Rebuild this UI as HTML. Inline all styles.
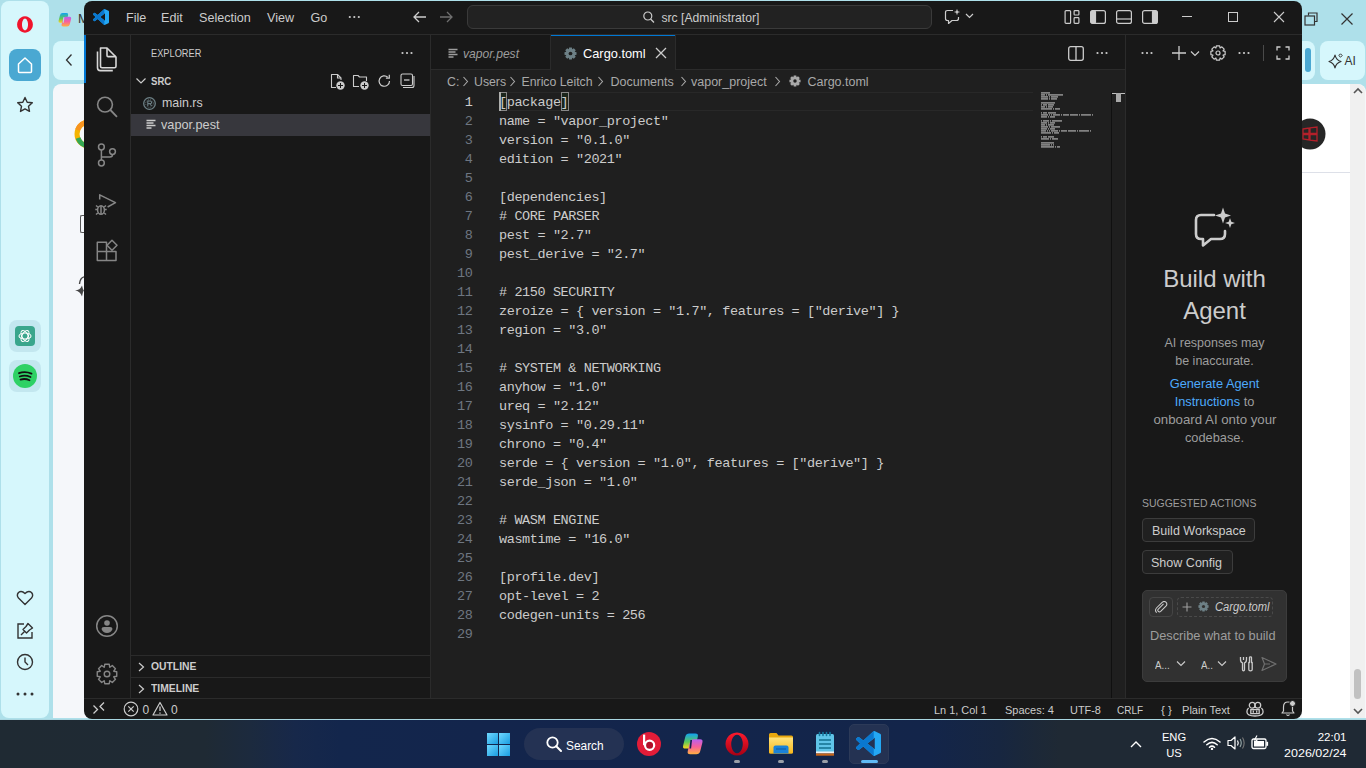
<!DOCTYPE html><html><head><meta charset="utf-8"><style>html,body{margin:0;padding:0;width:1366px;height:768px;overflow:hidden;position:relative;background:#aee0ea}</style></head><body>
<div style="position:absolute;left:0px;top:0px;width:1366px;height:720px;background:#aee0ea;"></div>
<div style="position:absolute;left:1px;top:1px;width:48px;height:717px;background:#d6f7fc;border-radius:8px;"></div>
<svg style="position:absolute;left:17px;top:16px;" width="16" height="17" viewBox="0 0 16 17"><path fill-rule="evenodd" d="M8 0.3 A7.9 8.2 0 1 1 7.99 0.3 Z M8 2.6 A3 5.9 0 1 0 8.01 2.6 Z" fill="#f0142c"/></svg>
<div style="position:absolute;left:9px;top:49px;width:32px;height:32px;background:#4aa8d2;border-radius:8px;"></div>
<svg style="position:absolute;left:9px;top:49px;" width="32" height="32" viewBox="0 0 32 32"><path d="M9.5 15 L16 9 L22.5 15 V22.5 Q22.5 23.5 21.5 23.5 H10.5 Q9.5 23.5 9.5 22.5 Z" fill="none" stroke="#fff" stroke-width="1.5" stroke-linejoin="round"/></svg>
<svg style="position:absolute;left:16px;top:96px;" width="18" height="17" viewBox="0 0 18 17"><path d="M9 1.5 L11.2 6.2 L16.3 6.8 L12.5 10.3 L13.5 15.4 L9 12.9 L4.5 15.4 L5.5 10.3 L1.7 6.8 L6.8 6.2 Z" fill="none" stroke="#333" stroke-width="1.4" stroke-linejoin="round"/></svg>
<div style="position:absolute;left:9px;top:320px;width:32px;height:32px;background:#c3e7ef;border-radius:8px;"></div>
<div style="position:absolute;left:15px;top:326px;width:20px;height:20px;background:#3aa68c;border-radius:4px;"></div>
<svg style="position:absolute;left:15px;top:326px;" width="20" height="20" viewBox="0 0 20 20"><g fill="none" stroke="#fff" stroke-width="1.1"><ellipse cx="10" cy="10" rx="6" ry="3" transform="rotate(0 10 10)"/><ellipse cx="10" cy="10" rx="6" ry="3" transform="rotate(60 10 10)"/><ellipse cx="10" cy="10" rx="6" ry="3" transform="rotate(120 10 10)"/></g></svg>
<div style="position:absolute;left:9px;top:360px;width:32px;height:32px;background:#c3e7ef;border-radius:8px;"></div>
<svg style="position:absolute;left:13px;top:364px;" width="24" height="24" viewBox="0 0 24 24"><circle cx="12" cy="12" r="12" fill="#2ed165"/><path d="M6 9.2 Q12 6.8 18.5 9.6 M6.8 12.5 Q12 10.6 17.5 13 M7.5 15.6 Q12 14.2 16.5 16.2" fill="none" stroke="#111" stroke-width="1.8" stroke-linecap="round"/></svg>
<svg style="position:absolute;left:15px;top:588px;" width="20" height="20" viewBox="0 0 20 20"><path d="M10 16.5 L3.5 10 Q1.2 7.2 3.5 4.5 Q6.5 2 10 5.5 Q13.5 2 16.5 4.5 Q18.8 7.2 16.5 10 Z" fill="none" stroke="#333" stroke-width="1.4" stroke-linejoin="round"/></svg>
<svg style="position:absolute;left:15px;top:621px;" width="20" height="20" viewBox="0 0 20 20"><path d="M9 3 H3 V17 H17 V11" fill="none" stroke="#333" stroke-width="1.4"/><path d="M13 2.5 L17.5 7 L14.5 9 L11.5 12 L8 8.5 L11 5.5 Z M9.5 10.5 L6 14" fill="none" stroke="#333" stroke-width="1.4" stroke-linejoin="round"/></svg>
<svg style="position:absolute;left:15px;top:652px;" width="20" height="20" viewBox="0 0 20 20"><circle cx="10" cy="10" r="7.5" fill="none" stroke="#333" stroke-width="1.4"/><path d="M10 5.5 V10 L13 13" fill="none" stroke="#333" stroke-width="1.4"/></svg>
<svg style="position:absolute;left:15px;top:690px;" width="20" height="8" viewBox="0 0 20 8"><circle cx="3" cy="4" r="1.5" fill="#333"/><circle cx="10" cy="4" r="1.5" fill="#333"/><circle cx="17" cy="4" r="1.5" fill="#333"/></svg>
<svg style="position:absolute;left:57px;top:12px;" width="16" height="15" viewBox="0 0 24 23"><defs><linearGradient id="cpxa" x1="0" y1="0" x2="0" y2="1"><stop offset="0" stop-color="#12a2f0"/><stop offset="0.55" stop-color="#5cc85a"/><stop offset="1" stop-color="#ffd21a"/></linearGradient><linearGradient id="cpxb" x1="0" y1="0" x2="0" y2="1"><stop offset="0" stop-color="#b860f0"/><stop offset="0.5" stop-color="#f8609a"/><stop offset="1" stop-color="#ffb040"/></linearGradient></defs><g transform="skewX(-14)"><rect x="5.5" y="1.6" width="12.5" height="15" rx="3.2" fill="url(#cpxa)"/><rect x="3" y="9" width="6" height="7.6" fill="#f06030" opacity="0.0"/><rect x="11.5" y="7.2" width="12.5" height="15" rx="3.2" fill="url(#cpxb)"/><path d="M12.2 8 L13.4 16.5" stroke="#aee0ea" stroke-width="1.6"/></g></svg>
<div style="position:absolute;top:9px;line-height:20px;font-family:'Liberation Sans',sans-serif;font-size:13px;color:#333;white-space:pre;left:78px;">M</div>
<div style="position:absolute;left:53px;top:41px;width:60px;height:39px;background:#d6f7fc;border-radius:8px;"></div>
<svg style="position:absolute;left:64px;top:53px;" width="10" height="14" viewBox="0 0 10 14"><path d="M7.5 1.5 L2.5 7 L7.5 12.5" fill="none" stroke="#333" stroke-width="1.3"/></svg>
<div style="position:absolute;left:53px;top:84px;width:1313px;height:634px;background:#f5f7fa;border-radius:8px 8px 0 0;"></div>
<div style="position:absolute;left:1302px;top:84px;width:48px;height:634px;background:#ffffff;"></div>
<div style="position:absolute;left:1350px;top:84px;width:15px;height:634px;background:#f0f0f0;border-radius:0 8px 0 0;"></div>
<svg style="position:absolute;left:1352px;top:86px;" width="12" height="10" viewBox="0 0 12 10"><path d="M2 7 L6 3 L10 7" fill="none" stroke="#555" stroke-width="1.6"/></svg>
<svg style="position:absolute;left:1352px;top:706px;" width="12" height="10" viewBox="0 0 12 10"><path d="M2 3 L6 7 L10 3" fill="none" stroke="#555" stroke-width="1.6"/></svg>
<div style="position:absolute;left:1354px;top:669px;width:7px;height:30px;background:#c1c1c1;border-radius:4px;"></div>
<div style="position:absolute;left:1302px;top:172px;width:48px;height:1px;background:#dde0e8;"></div>
<svg style="position:absolute;left:1294px;top:118px;" width="32" height="32" viewBox="0 0 32 32"><circle cx="16" cy="16" r="15.5" fill="#262626"/><path d="M9 11 L15 10 V15.5 H9 Z M16 9.8 L23 9 V15.5 H16 Z M9 16.5 H15 V22 L9 21 Z M16 16.5 H23 V23 L16 22.2 Z" fill="none" stroke="#b3202a" stroke-width="1.3"/></svg>
<svg style="position:absolute;left:72px;top:118px;" width="20" height="32" viewBox="0 0 20 32"><path d="M17 4 A12 12 0 0 0 17 28" fill="none" stroke="#f4b400" stroke-width="5"/><path d="M17 4 A12 12 0 0 0 5.5 12" fill="none" stroke="#f7931e" stroke-width="5"/><path d="M17 28 A12 12 0 0 1 6 20" fill="none" stroke="#34a853" stroke-width="5"/></svg>
<div style="position:absolute;left:80px;top:215px;width:8px;height:18px;background:transparent;border:1.5px solid #555;border-right:none;border-radius:2px 0 0 2px;box-sizing:border-box;"></div>
<svg style="position:absolute;left:74px;top:275px;" width="10" height="24" viewBox="0 0 10 24"><path d="M10 1.8 Q6 3 5.5 9" fill="none" stroke="#444" stroke-width="1.4"/><path d="M1 15.5 Q6 15.3 8 10.5 Q9 15 10 15.5 Q9 16 8 21.5 Q6 15.8 1 15.5 Z" fill="#444"/></svg>
<svg style="position:absolute;left:1304px;top:12px;" width="14" height="14" viewBox="0 0 14 14"><path d="M4.5 3.5 V1 H13 V9.5 H10.5" fill="none" stroke="#333" stroke-width="1.2"/><rect x="1" y="4" width="9.5" height="9" fill="none" stroke="#333" stroke-width="1.2"/></svg>
<svg style="position:absolute;left:1340px;top:12px;" width="14" height="14" viewBox="0 0 14 14"><path d="M1.5 1.5 L12.5 12.5 M12.5 1.5 L1.5 12.5" fill="none" stroke="#333" stroke-width="1.2"/></svg>
<div style="position:absolute;left:1280px;top:41px;width:35px;height:39px;background:#d6f7fc;border-radius:8px;"></div>
<div style="position:absolute;left:1305px;top:48px;width:6px;height:24px;background:#4aa8d2;border-radius:3px;"></div>
<div style="position:absolute;left:1320px;top:41px;width:45px;height:39px;background:#d6f7fc;border-radius:8px;"></div>
<svg style="position:absolute;left:1328px;top:53px;" width="16" height="16" viewBox="0 0 16 16"><path d="M7 2 Q8 7 13 8.5 Q8 10 7 15 Q6 10 1 8.5 Q6 7 7 2 Z" fill="none" stroke="#333" stroke-width="1.2" stroke-linejoin="round"/><path d="M12.5 0.8 L14.2 2.5 L12.5 4.2 L10.8 2.5 Z" fill="none" stroke="#333" stroke-width="1"/></svg>
<div style="position:absolute;top:50.5px;line-height:20px;font-family:'Liberation Sans',sans-serif;font-size:12px;color:#333;white-space:pre;left:1344.5px;">AI</div>
<div style="position:absolute;left:84px;top:1px;width:1218px;height:718px;background:#181818;border-radius:8px;overflow:hidden;"></div>
<div style="position:absolute;left:84px;top:34px;width:1218px;height:1px;background:#2b2b2b;"></div>
<div style="position:absolute;left:130px;top:35px;width:1px;height:663px;background:#2b2b2b;"></div>
<div style="position:absolute;left:430px;top:35px;width:1px;height:663px;background:#2b2b2b;"></div>
<div style="position:absolute;left:431px;top:69px;width:694px;height:629px;background:#1f1f1f;"></div>
<div style="position:absolute;left:431px;top:69px;width:694px;height:1px;background:#2b2b2b;"></div>
<div style="position:absolute;left:1125px;top:35px;width:1px;height:663px;background:#2b2b2b;"></div>
<div style="position:absolute;left:84px;top:698px;width:1218px;height:1px;background:#2b2b2b;"></div>
<svg style="position:absolute;left:93px;top:9px;" width="16" height="16" viewBox="0 0 100 100"><defs><clipPath id="vsa"><rect x="0" y="0" width="71" height="100"/></clipPath></defs><path d="M96.46 10.8L75.86.87a6.23 6.23 0 0 0-7.1 1.2L29.4 38.04 12.26 25.02a4.16 4.16 0 0 0-5.32.24L1.43 30.26a4.17 4.17 0 0 0 0 6.16L16.3 50 1.43 63.58a4.17 4.17 0 0 0 0 6.16l5.51 5a4.16 4.16 0 0 0 5.32.24l17.14-13.02 39.36 35.96a6.23 6.23 0 0 0 7.1 1.2l20.6-9.92a6.25 6.25 0 0 0 3.54-5.63V16.43a6.25 6.25 0 0 0-3.54-5.63zM75.02 72.7 45.1 50l29.92-22.7v45.4z" fill="#24a8f4"/><path d="M96.46 10.8L75.86.87a6.23 6.23 0 0 0-7.1 1.2L29.4 38.04 12.26 25.02a4.16 4.16 0 0 0-5.32.24L1.43 30.26a4.17 4.17 0 0 0 0 6.16L16.3 50 1.43 63.58a4.17 4.17 0 0 0 0 6.16l5.51 5a4.16 4.16 0 0 0 5.32.24l17.14-13.02 39.36 35.96a6.23 6.23 0 0 0 7.1 1.2l20.6-9.92a6.25 6.25 0 0 0 3.54-5.63V16.43a6.25 6.25 0 0 0-3.54-5.63zM75.02 72.7 45.1 50l29.92-22.7v45.4z" fill="#0a78cf" clip-path="url(#vsa)"/></svg>
<div style="position:absolute;top:8px;line-height:20px;font-family:'Liberation Sans',sans-serif;font-size:12.6px;color:#cccccc;white-space:pre;left:126px;">File</div>
<div style="position:absolute;top:8px;line-height:20px;font-family:'Liberation Sans',sans-serif;font-size:12.6px;color:#cccccc;white-space:pre;left:161px;">Edit</div>
<div style="position:absolute;top:8px;line-height:20px;font-family:'Liberation Sans',sans-serif;font-size:12.6px;color:#cccccc;white-space:pre;left:199px;">Selection</div>
<div style="position:absolute;top:8px;line-height:20px;font-family:'Liberation Sans',sans-serif;font-size:12.6px;color:#cccccc;white-space:pre;left:267px;">View</div>
<div style="position:absolute;top:8px;line-height:20px;font-family:'Liberation Sans',sans-serif;font-size:12.6px;color:#cccccc;white-space:pre;left:310.5px;">Go</div>
<svg style="position:absolute;left:347px;top:15px;" width="14" height="4" viewBox="0 0 14 4"><circle cx="2.8" cy="2" r="1.1" fill="#ccc"/><circle cx="7.3" cy="2" r="1.1" fill="#ccc"/><circle cx="11.8" cy="2" r="1.1" fill="#ccc"/></svg>
<svg style="position:absolute;left:412px;top:10px;" width="16" height="14" viewBox="0 0 16 14"><path d="M14 7 H2 M7 2 L2 7 L7 12" fill="none" stroke="#cccccc" stroke-width="1.3"/></svg>
<svg style="position:absolute;left:438px;top:10px;" width="16" height="14" viewBox="0 0 16 14"><path d="M2 7 H14 M9 2 L14 7 L9 12" fill="none" stroke="#6f6f6f" stroke-width="1.3"/></svg>
<div style="position:absolute;left:467px;top:5px;width:465px;height:24px;background:#222222;border:1px solid #3a3a3a;border-radius:6px;box-sizing:border-box;"></div>
<svg style="position:absolute;left:642px;top:11px;" width="14" height="12" viewBox="0 0 14 12"><circle cx="5.8" cy="5" r="4" fill="none" stroke="#cccccc" stroke-width="1.2"/><path d="M8.6 8 L12 11.5" stroke="#cccccc" stroke-width="1.3"/></svg>
<div style="position:absolute;top:8px;line-height:20px;font-family:'Liberation Sans',sans-serif;font-size:12.15px;color:#cccccc;white-space:pre;left:661.5px;">src [Administrator]</div>
<svg style="position:absolute;left:944px;top:8px;" width="18" height="17" viewBox="0 0 18 17"><path d="M9 2.5 H3.5 Q1.5 2.5 1.5 4.5 V10.5 Q1.5 12.5 3.5 12.5 H4.5 V15.5 L8 12.5 H12.5 Q14.5 12.5 14.5 10.5 V9" fill="none" stroke="#cccccc" stroke-width="1.2" stroke-linejoin="round"/><path d="M13 0.8 L13.8 3.2 L16.2 4 L13.8 4.8 L13 7.2 L12.2 4.8 L9.8 4 L12.2 3.2 Z" fill="#cccccc"/></svg>
<svg style="position:absolute;left:965px;top:13px;" width="9" height="6" viewBox="0 0 9 6"><path d="M1 1 L4.5 4.5 L8 1" fill="none" stroke="#cccccc" stroke-width="1.2"/></svg>
<svg style="position:absolute;left:1064px;top:10px;" width="16" height="14" viewBox="0 0 16 14"><rect x="1.1" y="0.6" width="5.5" height="12.8" rx="1" fill="none" stroke="#ccc" stroke-width="1.2"/><rect x="10.1" y="0.6" width="4.8" height="4.4" rx="0.8" fill="none" stroke="#ccc" stroke-width="1.2"/><rect x="10.1" y="7.6" width="4.8" height="5.8" rx="0.8" fill="none" stroke="#ccc" stroke-width="1.2"/></svg>
<svg style="position:absolute;left:1090px;top:10px;" width="16" height="14" viewBox="0 0 16 14"><rect x="0.6" y="0.6" width="14.8" height="12.8" rx="2" fill="none" stroke="#ccc" stroke-width="1.2"/><rect x="0.6" y="0.6" width="5.5" height="12.8" rx="1.5" fill="#ccc"/></svg>
<svg style="position:absolute;left:1116px;top:10px;" width="16" height="14" viewBox="0 0 16 14"><rect x="0.6" y="0.6" width="14.8" height="12.8" rx="2" fill="none" stroke="#ccc" stroke-width="1.2"/><path d="M0.6 9 H15.4" stroke="#ccc" stroke-width="1.2"/></svg>
<svg style="position:absolute;left:1142px;top:10px;" width="16" height="14" viewBox="0 0 16 14"><rect x="0.6" y="0.6" width="14.8" height="12.8" rx="2" fill="none" stroke="#ccc" stroke-width="1.2"/><rect x="9.9" y="0.6" width="5.5" height="12.8" rx="1.5" fill="#ccc"/></svg>
<div style="position:absolute;left:1182px;top:16px;width:10px;height:1px;background:#cccccc;"></div>
<div style="position:absolute;left:1228px;top:12px;width:10px;height:10px;background:transparent;border:1px solid #cccccc;box-sizing:border-box;"></div>
<svg style="position:absolute;left:1273px;top:11px;" width="12" height="12" viewBox="0 0 12 12"><path d="M1 1 L11 11 M11 1 L1 11" stroke="#cccccc" stroke-width="1.1"/></svg>
<div style="position:absolute;left:84px;top:35px;width:2px;height:48px;background:#0078d4;"></div>
<svg style="position:absolute;left:84px;top:35px;" width="46" height="240" viewBox="84 35 46 240"><path d="M100.5 48 H107 L116 57 V66.3 Q116 67.8 114.5 67.8 H102 Q100.5 67.8 100.5 66.3 Z" fill="none" stroke="#d7d7d7" stroke-width="1.6" stroke-linejoin="round"/><path d="M107 48 V55.5 Q107 56.6 108.1 56.6 H116" fill="none" stroke="#d7d7d7" stroke-width="1.6"/><path d="M97.5 51.5 V67.8 Q97.5 70.6 100.3 70.6 H112.8" fill="none" stroke="#d7d7d7" stroke-width="1.6"/><circle cx="105" cy="104.6" r="7.4" fill="none" stroke="#868686" stroke-width="1.6"/><path d="M110.4 110 L117 116.8" stroke="#868686" stroke-width="1.8"/><g fill="none" stroke="#868686" stroke-width="1.5"><circle cx="101.4" cy="147" r="2.9"/><circle cx="101.4" cy="163" r="2.9"/><circle cx="112.5" cy="151.6" r="2.9"/><path d="M101.4 149.9 V160.1 M112.5 154.5 Q112.5 157 110 157 H101.4"/></g><g fill="none" stroke="#868686" stroke-width="1.5" stroke-linejoin="round"><path d="M99.7 199.5 V194.8 L115.5 202.7 L107.6 207"/><ellipse cx="101" cy="210" rx="3.4" ry="4.3"/><path d="M101 206 V214 M95.3 209.5 H97.5 M104.5 209.5 H106.7 M96 205.5 L97.8 207 M106 205.5 L104.2 207 M96 214.5 L97.8 213 M106 214.5 L104.2 213"/></g><g fill="none" stroke="#868686" stroke-width="1.5" stroke-linejoin="round"><path d="M97.3 242.3 H106.5 V260.5 H97.3 Z M97.3 251.4 H116 V260.5 H106.5"/><path d="M112 240.3 L117 245.3 L112 250.3 L107 245.3 Z"/></g></svg>
<svg style="position:absolute;left:95px;top:614px;" width="24" height="24" viewBox="0 0 24 24"><circle cx="12" cy="12" r="10.3" fill="none" stroke="#868686" stroke-width="1.5"/><circle cx="12" cy="9" r="2.8" fill="#868686"/><path d="M6.5 15 Q6.5 13 9 13 H15 Q17.5 13 17.5 15 Q16 19 12 19 Q8 19 6.5 15 Z" fill="#868686"/></svg>
<svg style="position:absolute;left:95px;top:662px;" width="24" height="24" viewBox="0 0 24 24"><path d="M18.78 9.29 L21.75 9.77 L21.75 14.23 L18.78 14.71 L18.71 14.88 L20.47 17.32 L17.32 20.47 L14.88 18.71 L14.71 18.78 L14.23 21.75 L9.77 21.75 L9.29 18.78 L9.12 18.71 L6.68 20.47 L3.53 17.32 L5.29 14.88 L5.22 14.71 L2.25 14.23 L2.25 9.77 L5.22 9.29 L5.29 9.12 L3.53 6.68 L6.68 3.53 L9.12 5.29 L9.29 5.22 L9.77 2.25 L14.23 2.25 L14.71 5.22 L14.88 5.29 L17.32 3.53 L20.47 6.68 L18.71 9.12 Z" fill="none" stroke="#868686" stroke-width="1.4" stroke-linejoin="round"/><circle cx="12" cy="12" r="2.8" fill="none" stroke="#868686" stroke-width="1.4"/></svg>
<div style="position:absolute;top:43px;line-height:20px;font-family:'Liberation Sans',sans-serif;font-size:11px;color:#cccccc;white-space:pre;left:151px;transform:scaleX(0.84);transform-origin:0 0;">EXPLORER</div>
<svg style="position:absolute;left:401px;top:51px;" width="12" height="4" viewBox="0 0 12 4"><circle cx="1.5" cy="2" r="1.1" fill="#ccc"/><circle cx="6" cy="2" r="1.1" fill="#ccc"/><circle cx="10.5" cy="2" r="1.1" fill="#ccc"/></svg>
<svg style="position:absolute;left:135px;top:77px;" width="12" height="8" viewBox="0 0 12 8"><path d="M1.5 1.5 L6 6 L10.5 1.5" fill="none" stroke="#cccccc" stroke-width="1.2"/></svg>
<div style="position:absolute;top:71px;line-height:20px;font-family:'Liberation Sans',sans-serif;font-size:11px;color:#cccccc;white-space:pre;font-weight:bold;left:151px;transform:scaleX(0.87);transform-origin:0 0;">SRC</div>
<svg style="position:absolute;left:330px;top:73px;" width="16" height="17" viewBox="0 0 16 17"><path d="M6 14.5 H1.5 V1.5 H7.5 L11 5 V7" fill="none" stroke="#cccccc" stroke-width="1.1" stroke-linejoin="round"/><path d="M7.5 1.5 V5 H11" fill="none" stroke="#cccccc" stroke-width="1.1"/><circle cx="10.5" cy="12.5" r="4.2" fill="#cccccc"/><path d="M10.5 10 V15 M8 12.5 H13" stroke="#181818" stroke-width="1"/></svg>
<svg style="position:absolute;left:352px;top:73px;" width="18" height="17" viewBox="0 0 18 17"><path d="M7 13.5 H1.5 V2.5 H6 L7.5 4 H14.5 V8" fill="none" stroke="#cccccc" stroke-width="1.1" stroke-linejoin="round"/><circle cx="12.5" cy="12.5" r="4.2" fill="#cccccc"/><path d="M12.5 10 V15 M10 12.5 H15" stroke="#181818" stroke-width="1"/></svg>
<svg style="position:absolute;left:377px;top:73px;" width="15" height="16" viewBox="0 0 15 16"><path d="M12.5 8 A5.2 5.2 0 1 1 10.8 4.2" fill="none" stroke="#cccccc" stroke-width="1.2"/><path d="M12.3 1.8 V5.2 H8.9" fill="none" stroke="#cccccc" stroke-width="1.2"/></svg>
<svg style="position:absolute;left:400px;top:73px;" width="17" height="16" viewBox="0 0 17 16"><rect x="1" y="1" width="11.5" height="11.5" rx="1.5" fill="none" stroke="#cccccc" stroke-width="1.1"/><path d="M4 7 H9.5" stroke="#cccccc" stroke-width="1.3"/><path d="M14 3 V12.5 Q14 14.5 12 14.5 H3" fill="none" stroke="#cccccc" stroke-width="1.1"/></svg>
<svg style="position:absolute;left:143px;top:97px;" width="13" height="13" viewBox="0 0 13 13"><circle cx="6.5" cy="6.5" r="5.8" fill="none" stroke="#6d8086" stroke-width="1.3"/><circle cx="6.5" cy="6.5" r="3.8" fill="none" stroke="#6d8086" stroke-width="0.8" stroke-dasharray="1 1"/><path d="M4.8 9 V4 H7.2 Q8.6 4 8.6 5.4 Q8.6 6.6 7.2 6.6 H4.8 M6.8 6.6 L8.6 9" fill="none" stroke="#6d8086" stroke-width="1.1"/></svg>
<div style="position:absolute;top:93px;line-height:20px;font-family:'Liberation Sans',sans-serif;font-size:13px;color:#cccccc;white-space:pre;left:161.5px;transform:scaleX(0.955);transform-origin:0 0;">main.rs</div>
<div style="position:absolute;left:131px;top:114px;width:299px;height:22px;background:#37373d;"></div>
<svg style="position:absolute;left:146px;top:119px;" width="11" height="11" viewBox="0 0 11 11"><path d="M0.5 1.5 H9.5 M0.5 4 H7.5 M0.5 6.5 H9.5 M0.5 9 H5.5" stroke="#cccccc" stroke-width="1.3"/></svg>
<div style="position:absolute;top:115px;line-height:20px;font-family:'Liberation Sans',sans-serif;font-size:13px;color:#cccccc;white-space:pre;left:161px;transform:scaleX(0.975);transform-origin:0 0;">vapor.pest</div>
<div style="position:absolute;left:131px;top:655px;width:299px;height:1px;background:#2b2b2b;"></div>
<div style="position:absolute;left:131px;top:677px;width:299px;height:1px;background:#2b2b2b;"></div>
<svg style="position:absolute;left:136px;top:662px;" width="10" height="10" viewBox="0 0 10 10"><path d="M3 1 L7.5 5 L3 9" fill="none" stroke="#cccccc" stroke-width="1.2"/></svg>
<div style="position:absolute;top:656px;line-height:20px;font-family:'Liberation Sans',sans-serif;font-size:10.5px;color:#cccccc;white-space:pre;font-weight:bold;left:151px;transform:scaleX(0.985);transform-origin:0 0;">OUTLINE</div>
<svg style="position:absolute;left:136px;top:684px;" width="10" height="10" viewBox="0 0 10 10"><path d="M3 1 L7.5 5 L3 9" fill="none" stroke="#cccccc" stroke-width="1.2"/></svg>
<div style="position:absolute;top:678px;line-height:20px;font-family:'Liberation Sans',sans-serif;font-size:10.5px;color:#cccccc;white-space:pre;font-weight:bold;left:151px;transform:scaleX(0.985);transform-origin:0 0;">TIMELINE</div>
<div style="position:absolute;left:550px;top:35px;width:1px;height:34px;background:#2b2b2b;"></div>
<div style="position:absolute;left:551px;top:35px;width:124px;height:35px;background:#1f1f1f;"></div>
<div style="position:absolute;left:551px;top:35px;width:124px;height:1px;background:#0078d4;"></div>
<div style="position:absolute;left:675px;top:35px;width:1px;height:34px;background:#2b2b2b;"></div>
<svg style="position:absolute;left:448px;top:48px;" width="11" height="11" viewBox="0 0 11 11"><path d="M0.5 1.5 H9.5 M0.5 4 H7.5 M0.5 6.5 H9.5 M0.5 9 H5.5" stroke="#9d9d9d" stroke-width="1.3"/></svg>
<div style="position:absolute;top:44px;line-height:20px;font-family:'Liberation Sans',sans-serif;font-size:13px;color:#9d9d9d;white-space:pre;font-style:italic;left:463px;transform:scaleX(0.93);transform-origin:0 0;">vapor.pest</div>
<svg style="position:absolute;left:564px;top:47px;" width="13" height="13" viewBox="0 0 16 16"><path d="M13.20 5.92 L15.41 6.31 L15.41 9.69 L13.20 10.08 L13.15 10.21 L14.44 12.04 L12.04 14.44 L10.21 13.15 L10.08 13.20 L9.69 15.41 L6.31 15.41 L5.92 13.20 L5.79 13.15 L3.96 14.44 L1.56 12.04 L2.85 10.21 L2.80 10.08 L0.59 9.69 L0.59 6.31 L2.80 5.92 L2.85 5.79 L1.56 3.96 L3.96 1.56 L5.79 2.85 L5.92 2.80 L6.31 0.59 L9.69 0.59 L10.08 2.80 L10.21 2.85 L12.04 1.56 L14.44 3.96 L13.15 5.79 Z" fill="#6d8086"/><circle cx="8" cy="8" r="2.3" fill="#1f1f1f"/></svg>
<div style="position:absolute;top:44px;line-height:20px;font-family:'Liberation Sans',sans-serif;font-size:13px;color:#ffffff;white-space:pre;left:583px;transform:scaleX(0.985);transform-origin:0 0;">Cargo.toml</div>
<svg style="position:absolute;left:655px;top:47px;" width="12" height="12" viewBox="0 0 12 12"><path d="M1 1 L11 11 M11 1 L1 11" stroke="#cccccc" stroke-width="1.3"/></svg>
<svg style="position:absolute;left:1068px;top:46px;" width="16" height="15" viewBox="0 0 16 15"><rect x="0.7" y="0.7" width="14.6" height="13.6" rx="2" fill="none" stroke="#ccc" stroke-width="1.3"/><path d="M8 0.7 V14.3" stroke="#ccc" stroke-width="1.3"/></svg>
<svg style="position:absolute;left:1096px;top:51px;" width="12" height="4" viewBox="0 0 12 4"><circle cx="1.5" cy="2" r="1.1" fill="#ccc"/><circle cx="6" cy="2" r="1.1" fill="#ccc"/><circle cx="10.5" cy="2" r="1.1" fill="#ccc"/></svg>
<div style="position:absolute;top:72px;line-height:20px;font-family:'Liberation Sans',sans-serif;font-size:12.3px;color:#a9a9a9;white-space:pre;left:447px;">C:</div>
<svg style="position:absolute;left:462px;top:76px;" width="7" height="11" viewBox="0 0 7 11"><path d="M1.5 1 L5.5 5.5 L1.5 10" fill="none" stroke="#a9a9a9" stroke-width="1.1"/></svg>
<div style="position:absolute;top:72px;line-height:20px;font-family:'Liberation Sans',sans-serif;font-size:12.3px;color:#a9a9a9;white-space:pre;left:474px;">Users</div>
<svg style="position:absolute;left:509px;top:76px;" width="7" height="11" viewBox="0 0 7 11"><path d="M1.5 1 L5.5 5.5 L1.5 10" fill="none" stroke="#a9a9a9" stroke-width="1.1"/></svg>
<div style="position:absolute;top:72px;line-height:20px;font-family:'Liberation Sans',sans-serif;font-size:12.3px;color:#a9a9a9;white-space:pre;left:521.5px;">Enrico Leitch</div>
<svg style="position:absolute;left:597px;top:76px;" width="7" height="11" viewBox="0 0 7 11"><path d="M1.5 1 L5.5 5.5 L1.5 10" fill="none" stroke="#a9a9a9" stroke-width="1.1"/></svg>
<div style="position:absolute;top:72px;line-height:20px;font-family:'Liberation Sans',sans-serif;font-size:12.5px;color:#a9a9a9;white-space:pre;left:610.5px;">Documents</div>
<svg style="position:absolute;left:679.5px;top:76px;" width="7" height="11" viewBox="0 0 7 11"><path d="M1.5 1 L5.5 5.5 L1.5 10" fill="none" stroke="#a9a9a9" stroke-width="1.1"/></svg>
<div style="position:absolute;top:72px;line-height:20px;font-family:'Liberation Sans',sans-serif;font-size:12.5px;color:#a9a9a9;white-space:pre;left:691px;">vapor_project</div>
<svg style="position:absolute;left:773.5px;top:76px;" width="7" height="11" viewBox="0 0 7 11"><path d="M1.5 1 L5.5 5.5 L1.5 10" fill="none" stroke="#a9a9a9" stroke-width="1.1"/></svg>
<svg style="position:absolute;left:789px;top:75px;" width="12" height="12" viewBox="0 0 16 16"><path d="M13.20 5.92 L15.41 6.31 L15.41 9.69 L13.20 10.08 L13.15 10.21 L14.44 12.04 L12.04 14.44 L10.21 13.15 L10.08 13.20 L9.69 15.41 L6.31 15.41 L5.92 13.20 L5.79 13.15 L3.96 14.44 L1.56 12.04 L2.85 10.21 L2.80 10.08 L0.59 9.69 L0.59 6.31 L2.80 5.92 L2.85 5.79 L1.56 3.96 L3.96 1.56 L5.79 2.85 L5.92 2.80 L6.31 0.59 L9.69 0.59 L10.08 2.80 L10.21 2.85 L12.04 1.56 L14.44 3.96 L13.15 5.79 Z" fill="#a9a9a9"/><circle cx="8" cy="8" r="2.3" fill="#1f1f1f"/></svg>
<div style="position:absolute;top:72px;line-height:20px;font-family:'Liberation Sans',sans-serif;font-size:12.5px;color:#a9a9a9;white-space:pre;left:807.5px;">Cargo.toml</div>
<div style="position:absolute;left:499px;top:92px;width:534px;height:19px;background:transparent;border-top:1px solid #282828;border-bottom:1px solid #282828;box-sizing:border-box;"></div>
<div style="position:absolute;left:499px;top:92px;width:8px;height:19px;background:rgba(0,100,0,0.1);border:1px solid #888;box-sizing:border-box;"></div>
<div style="position:absolute;left:561px;top:92px;width:8px;height:19px;background:rgba(0,100,0,0.1);border:1px solid #888;box-sizing:border-box;"></div>
<div style="position:absolute;left:499px;top:92px;width:2px;height:19px;background:#aeafad;"></div>
<div style="position:absolute;top:93px;line-height:20px;font-family:'Liberation Mono',monospace;font-size:13.5px;color:#cccccc;white-space:pre;letter-spacing:-0.4029999999999996px;right:893.5px;">1</div>
<div style="position:absolute;top:93px;line-height:20px;font-family:'Liberation Mono',monospace;font-size:13.5px;color:#cccccc;white-space:pre;letter-spacing:-0.4029999999999996px;left:499px;">[package]</div>
<div style="position:absolute;top:112px;line-height:20px;font-family:'Liberation Mono',monospace;font-size:13.5px;color:#6e7681;white-space:pre;letter-spacing:-0.4029999999999996px;right:893.5px;">2</div>
<div style="position:absolute;top:112px;line-height:20px;font-family:'Liberation Mono',monospace;font-size:13.5px;color:#cccccc;white-space:pre;letter-spacing:-0.4029999999999996px;left:499px;">name = "vapor_project"</div>
<div style="position:absolute;top:131px;line-height:20px;font-family:'Liberation Mono',monospace;font-size:13.5px;color:#6e7681;white-space:pre;letter-spacing:-0.4029999999999996px;right:893.5px;">3</div>
<div style="position:absolute;top:131px;line-height:20px;font-family:'Liberation Mono',monospace;font-size:13.5px;color:#cccccc;white-space:pre;letter-spacing:-0.4029999999999996px;left:499px;">version = "0.1.0"</div>
<div style="position:absolute;top:150px;line-height:20px;font-family:'Liberation Mono',monospace;font-size:13.5px;color:#6e7681;white-space:pre;letter-spacing:-0.4029999999999996px;right:893.5px;">4</div>
<div style="position:absolute;top:150px;line-height:20px;font-family:'Liberation Mono',monospace;font-size:13.5px;color:#cccccc;white-space:pre;letter-spacing:-0.4029999999999996px;left:499px;">edition = "2021"</div>
<div style="position:absolute;top:169px;line-height:20px;font-family:'Liberation Mono',monospace;font-size:13.5px;color:#6e7681;white-space:pre;letter-spacing:-0.4029999999999996px;right:893.5px;">5</div>
<div style="position:absolute;top:188px;line-height:20px;font-family:'Liberation Mono',monospace;font-size:13.5px;color:#6e7681;white-space:pre;letter-spacing:-0.4029999999999996px;right:893.5px;">6</div>
<div style="position:absolute;top:188px;line-height:20px;font-family:'Liberation Mono',monospace;font-size:13.5px;color:#cccccc;white-space:pre;letter-spacing:-0.4029999999999996px;left:499px;">[dependencies]</div>
<div style="position:absolute;top:207px;line-height:20px;font-family:'Liberation Mono',monospace;font-size:13.5px;color:#6e7681;white-space:pre;letter-spacing:-0.4029999999999996px;right:893.5px;">7</div>
<div style="position:absolute;top:207px;line-height:20px;font-family:'Liberation Mono',monospace;font-size:13.5px;color:#cccccc;white-space:pre;letter-spacing:-0.4029999999999996px;left:499px;"># CORE PARSER</div>
<div style="position:absolute;top:226px;line-height:20px;font-family:'Liberation Mono',monospace;font-size:13.5px;color:#6e7681;white-space:pre;letter-spacing:-0.4029999999999996px;right:893.5px;">8</div>
<div style="position:absolute;top:226px;line-height:20px;font-family:'Liberation Mono',monospace;font-size:13.5px;color:#cccccc;white-space:pre;letter-spacing:-0.4029999999999996px;left:499px;">pest = "2.7"</div>
<div style="position:absolute;top:245px;line-height:20px;font-family:'Liberation Mono',monospace;font-size:13.5px;color:#6e7681;white-space:pre;letter-spacing:-0.4029999999999996px;right:893.5px;">9</div>
<div style="position:absolute;top:245px;line-height:20px;font-family:'Liberation Mono',monospace;font-size:13.5px;color:#cccccc;white-space:pre;letter-spacing:-0.4029999999999996px;left:499px;">pest_derive = "2.7"</div>
<div style="position:absolute;top:264px;line-height:20px;font-family:'Liberation Mono',monospace;font-size:13.5px;color:#6e7681;white-space:pre;letter-spacing:-0.4029999999999996px;right:893.5px;">10</div>
<div style="position:absolute;top:283px;line-height:20px;font-family:'Liberation Mono',monospace;font-size:13.5px;color:#6e7681;white-space:pre;letter-spacing:-0.4029999999999996px;right:893.5px;">11</div>
<div style="position:absolute;top:283px;line-height:20px;font-family:'Liberation Mono',monospace;font-size:13.5px;color:#cccccc;white-space:pre;letter-spacing:-0.4029999999999996px;left:499px;"># 2150 SECURITY</div>
<div style="position:absolute;top:302px;line-height:20px;font-family:'Liberation Mono',monospace;font-size:13.5px;color:#6e7681;white-space:pre;letter-spacing:-0.4029999999999996px;right:893.5px;">12</div>
<div style="position:absolute;top:302px;line-height:20px;font-family:'Liberation Mono',monospace;font-size:13.5px;color:#cccccc;white-space:pre;letter-spacing:-0.4029999999999996px;left:499px;">zeroize = { version = "1.7", features = ["derive"] }</div>
<div style="position:absolute;top:321px;line-height:20px;font-family:'Liberation Mono',monospace;font-size:13.5px;color:#6e7681;white-space:pre;letter-spacing:-0.4029999999999996px;right:893.5px;">13</div>
<div style="position:absolute;top:321px;line-height:20px;font-family:'Liberation Mono',monospace;font-size:13.5px;color:#cccccc;white-space:pre;letter-spacing:-0.4029999999999996px;left:499px;">region = "3.0"</div>
<div style="position:absolute;top:340px;line-height:20px;font-family:'Liberation Mono',monospace;font-size:13.5px;color:#6e7681;white-space:pre;letter-spacing:-0.4029999999999996px;right:893.5px;">14</div>
<div style="position:absolute;top:359px;line-height:20px;font-family:'Liberation Mono',monospace;font-size:13.5px;color:#6e7681;white-space:pre;letter-spacing:-0.4029999999999996px;right:893.5px;">15</div>
<div style="position:absolute;top:359px;line-height:20px;font-family:'Liberation Mono',monospace;font-size:13.5px;color:#cccccc;white-space:pre;letter-spacing:-0.4029999999999996px;left:499px;"># SYSTEM &amp; NETWORKING</div>
<div style="position:absolute;top:378px;line-height:20px;font-family:'Liberation Mono',monospace;font-size:13.5px;color:#6e7681;white-space:pre;letter-spacing:-0.4029999999999996px;right:893.5px;">16</div>
<div style="position:absolute;top:378px;line-height:20px;font-family:'Liberation Mono',monospace;font-size:13.5px;color:#cccccc;white-space:pre;letter-spacing:-0.4029999999999996px;left:499px;">anyhow = "1.0"</div>
<div style="position:absolute;top:397px;line-height:20px;font-family:'Liberation Mono',monospace;font-size:13.5px;color:#6e7681;white-space:pre;letter-spacing:-0.4029999999999996px;right:893.5px;">17</div>
<div style="position:absolute;top:397px;line-height:20px;font-family:'Liberation Mono',monospace;font-size:13.5px;color:#cccccc;white-space:pre;letter-spacing:-0.4029999999999996px;left:499px;">ureq = "2.12"</div>
<div style="position:absolute;top:416px;line-height:20px;font-family:'Liberation Mono',monospace;font-size:13.5px;color:#6e7681;white-space:pre;letter-spacing:-0.4029999999999996px;right:893.5px;">18</div>
<div style="position:absolute;top:416px;line-height:20px;font-family:'Liberation Mono',monospace;font-size:13.5px;color:#cccccc;white-space:pre;letter-spacing:-0.4029999999999996px;left:499px;">sysinfo = "0.29.11"</div>
<div style="position:absolute;top:435px;line-height:20px;font-family:'Liberation Mono',monospace;font-size:13.5px;color:#6e7681;white-space:pre;letter-spacing:-0.4029999999999996px;right:893.5px;">19</div>
<div style="position:absolute;top:435px;line-height:20px;font-family:'Liberation Mono',monospace;font-size:13.5px;color:#cccccc;white-space:pre;letter-spacing:-0.4029999999999996px;left:499px;">chrono = "0.4"</div>
<div style="position:absolute;top:454px;line-height:20px;font-family:'Liberation Mono',monospace;font-size:13.5px;color:#6e7681;white-space:pre;letter-spacing:-0.4029999999999996px;right:893.5px;">20</div>
<div style="position:absolute;top:454px;line-height:20px;font-family:'Liberation Mono',monospace;font-size:13.5px;color:#cccccc;white-space:pre;letter-spacing:-0.4029999999999996px;left:499px;">serde = { version = "1.0", features = ["derive"] }</div>
<div style="position:absolute;top:473px;line-height:20px;font-family:'Liberation Mono',monospace;font-size:13.5px;color:#6e7681;white-space:pre;letter-spacing:-0.4029999999999996px;right:893.5px;">21</div>
<div style="position:absolute;top:473px;line-height:20px;font-family:'Liberation Mono',monospace;font-size:13.5px;color:#cccccc;white-space:pre;letter-spacing:-0.4029999999999996px;left:499px;">serde_json = "1.0"</div>
<div style="position:absolute;top:492px;line-height:20px;font-family:'Liberation Mono',monospace;font-size:13.5px;color:#6e7681;white-space:pre;letter-spacing:-0.4029999999999996px;right:893.5px;">22</div>
<div style="position:absolute;top:511px;line-height:20px;font-family:'Liberation Mono',monospace;font-size:13.5px;color:#6e7681;white-space:pre;letter-spacing:-0.4029999999999996px;right:893.5px;">23</div>
<div style="position:absolute;top:511px;line-height:20px;font-family:'Liberation Mono',monospace;font-size:13.5px;color:#cccccc;white-space:pre;letter-spacing:-0.4029999999999996px;left:499px;"># WASM ENGINE</div>
<div style="position:absolute;top:530px;line-height:20px;font-family:'Liberation Mono',monospace;font-size:13.5px;color:#6e7681;white-space:pre;letter-spacing:-0.4029999999999996px;right:893.5px;">24</div>
<div style="position:absolute;top:530px;line-height:20px;font-family:'Liberation Mono',monospace;font-size:13.5px;color:#cccccc;white-space:pre;letter-spacing:-0.4029999999999996px;left:499px;">wasmtime = "16.0"</div>
<div style="position:absolute;top:549px;line-height:20px;font-family:'Liberation Mono',monospace;font-size:13.5px;color:#6e7681;white-space:pre;letter-spacing:-0.4029999999999996px;right:893.5px;">25</div>
<div style="position:absolute;top:568px;line-height:20px;font-family:'Liberation Mono',monospace;font-size:13.5px;color:#6e7681;white-space:pre;letter-spacing:-0.4029999999999996px;right:893.5px;">26</div>
<div style="position:absolute;top:568px;line-height:20px;font-family:'Liberation Mono',monospace;font-size:13.5px;color:#cccccc;white-space:pre;letter-spacing:-0.4029999999999996px;left:499px;">[profile.dev]</div>
<div style="position:absolute;top:587px;line-height:20px;font-family:'Liberation Mono',monospace;font-size:13.5px;color:#6e7681;white-space:pre;letter-spacing:-0.4029999999999996px;right:893.5px;">27</div>
<div style="position:absolute;top:587px;line-height:20px;font-family:'Liberation Mono',monospace;font-size:13.5px;color:#cccccc;white-space:pre;letter-spacing:-0.4029999999999996px;left:499px;">opt-level = 2</div>
<div style="position:absolute;top:606px;line-height:20px;font-family:'Liberation Mono',monospace;font-size:13.5px;color:#6e7681;white-space:pre;letter-spacing:-0.4029999999999996px;right:893.5px;">28</div>
<div style="position:absolute;top:606px;line-height:20px;font-family:'Liberation Mono',monospace;font-size:13.5px;color:#cccccc;white-space:pre;letter-spacing:-0.4029999999999996px;left:499px;">codegen-units = 256</div>
<div style="position:absolute;top:625px;line-height:20px;font-family:'Liberation Mono',monospace;font-size:13.5px;color:#6e7681;white-space:pre;letter-spacing:-0.4029999999999996px;right:893.5px;">29</div>
<svg style="position:absolute;left:1041px;top:92px;" width="70" height="60" viewBox="0 0 70 60"><rect x="0" y="0.2" width="9" height="1.4" fill="#9a9a9a"/><rect x="0" y="2.2" width="4" height="1.4" fill="#9a9a9a"/><rect x="5" y="2.2" width="1" height="1.4" fill="#9a9a9a"/><rect x="7" y="2.2" width="15" height="1.4" fill="#9a9a9a"/><rect x="0" y="4.2" width="7" height="1.4" fill="#9a9a9a"/><rect x="8" y="4.2" width="1" height="1.4" fill="#9a9a9a"/><rect x="10" y="4.2" width="7" height="1.4" fill="#9a9a9a"/><rect x="0" y="6.2" width="7" height="1.4" fill="#9a9a9a"/><rect x="8" y="6.2" width="1" height="1.4" fill="#9a9a9a"/><rect x="10" y="6.2" width="6" height="1.4" fill="#9a9a9a"/><rect x="0" y="10.2" width="14" height="1.4" fill="#9a9a9a"/><rect x="0" y="12.2" width="1" height="1.4" fill="#9a9a9a"/><rect x="2" y="12.2" width="4" height="1.4" fill="#9a9a9a"/><rect x="7" y="12.2" width="6" height="1.4" fill="#9a9a9a"/><rect x="0" y="14.2" width="4" height="1.4" fill="#9a9a9a"/><rect x="5" y="14.2" width="1" height="1.4" fill="#9a9a9a"/><rect x="7" y="14.2" width="5" height="1.4" fill="#9a9a9a"/><rect x="0" y="16.2" width="11" height="1.4" fill="#9a9a9a"/><rect x="12" y="16.2" width="1" height="1.4" fill="#9a9a9a"/><rect x="14" y="16.2" width="5" height="1.4" fill="#9a9a9a"/><rect x="0" y="20.2" width="1" height="1.4" fill="#9a9a9a"/><rect x="2" y="20.2" width="4" height="1.4" fill="#9a9a9a"/><rect x="7" y="20.2" width="8" height="1.4" fill="#9a9a9a"/><rect x="0" y="22.2" width="7" height="1.4" fill="#9a9a9a"/><rect x="8" y="22.2" width="1" height="1.4" fill="#9a9a9a"/><rect x="10" y="22.2" width="1" height="1.4" fill="#9a9a9a"/><rect x="12" y="22.2" width="7" height="1.4" fill="#9a9a9a"/><rect x="20" y="22.2" width="1" height="1.4" fill="#9a9a9a"/><rect x="22" y="22.2" width="6" height="1.4" fill="#9a9a9a"/><rect x="29" y="22.2" width="8" height="1.4" fill="#9a9a9a"/><rect x="38" y="22.2" width="1" height="1.4" fill="#9a9a9a"/><rect x="40" y="22.2" width="10" height="1.4" fill="#9a9a9a"/><rect x="51" y="22.2" width="1" height="1.4" fill="#9a9a9a"/><rect x="0" y="24.2" width="6" height="1.4" fill="#9a9a9a"/><rect x="7" y="24.2" width="1" height="1.4" fill="#9a9a9a"/><rect x="9" y="24.2" width="5" height="1.4" fill="#9a9a9a"/><rect x="0" y="28.2" width="1" height="1.4" fill="#9a9a9a"/><rect x="2" y="28.2" width="6" height="1.4" fill="#9a9a9a"/><rect x="9" y="28.2" width="1" height="1.4" fill="#9a9a9a"/><rect x="11" y="28.2" width="10" height="1.4" fill="#9a9a9a"/><rect x="0" y="30.2" width="6" height="1.4" fill="#9a9a9a"/><rect x="7" y="30.2" width="1" height="1.4" fill="#9a9a9a"/><rect x="9" y="30.2" width="5" height="1.4" fill="#9a9a9a"/><rect x="0" y="32.2" width="4" height="1.4" fill="#9a9a9a"/><rect x="5" y="32.2" width="1" height="1.4" fill="#9a9a9a"/><rect x="7" y="32.2" width="6" height="1.4" fill="#9a9a9a"/><rect x="0" y="34.2" width="7" height="1.4" fill="#9a9a9a"/><rect x="8" y="34.2" width="1" height="1.4" fill="#9a9a9a"/><rect x="10" y="34.2" width="9" height="1.4" fill="#9a9a9a"/><rect x="0" y="36.2" width="6" height="1.4" fill="#9a9a9a"/><rect x="7" y="36.2" width="1" height="1.4" fill="#9a9a9a"/><rect x="9" y="36.2" width="5" height="1.4" fill="#9a9a9a"/><rect x="0" y="38.2" width="5" height="1.4" fill="#9a9a9a"/><rect x="6" y="38.2" width="1" height="1.4" fill="#9a9a9a"/><rect x="8" y="38.2" width="1" height="1.4" fill="#9a9a9a"/><rect x="10" y="38.2" width="7" height="1.4" fill="#9a9a9a"/><rect x="18" y="38.2" width="1" height="1.4" fill="#9a9a9a"/><rect x="20" y="38.2" width="6" height="1.4" fill="#9a9a9a"/><rect x="27" y="38.2" width="8" height="1.4" fill="#9a9a9a"/><rect x="36" y="38.2" width="1" height="1.4" fill="#9a9a9a"/><rect x="38" y="38.2" width="10" height="1.4" fill="#9a9a9a"/><rect x="49" y="38.2" width="1" height="1.4" fill="#9a9a9a"/><rect x="0" y="40.2" width="10" height="1.4" fill="#9a9a9a"/><rect x="11" y="40.2" width="1" height="1.4" fill="#9a9a9a"/><rect x="13" y="40.2" width="5" height="1.4" fill="#9a9a9a"/><rect x="0" y="44.2" width="1" height="1.4" fill="#9a9a9a"/><rect x="2" y="44.2" width="4" height="1.4" fill="#9a9a9a"/><rect x="7" y="44.2" width="6" height="1.4" fill="#9a9a9a"/><rect x="0" y="46.2" width="8" height="1.4" fill="#9a9a9a"/><rect x="9" y="46.2" width="1" height="1.4" fill="#9a9a9a"/><rect x="11" y="46.2" width="6" height="1.4" fill="#9a9a9a"/><rect x="0" y="50.2" width="13" height="1.4" fill="#9a9a9a"/><rect x="0" y="52.2" width="9" height="1.4" fill="#9a9a9a"/><rect x="10" y="52.2" width="1" height="1.4" fill="#9a9a9a"/><rect x="12" y="52.2" width="1" height="1.4" fill="#9a9a9a"/><rect x="0" y="54.2" width="13" height="1.4" fill="#9a9a9a"/><rect x="14" y="54.2" width="1" height="1.4" fill="#9a9a9a"/><rect x="16" y="54.2" width="3" height="1.4" fill="#9a9a9a"/></svg>
<div style="position:absolute;left:1111px;top:92px;width:1px;height:606px;background:#101010;"></div>
<div style="position:absolute;left:1112px;top:93px;width:13px;height:1px;background:#c0c0c0;"></div>
<div style="position:absolute;left:1116px;top:93px;width:5px;height:9px;background:#a8a8a8;"></div>
<svg style="position:absolute;left:1141px;top:51px;" width="12" height="4" viewBox="0 0 12 4"><circle cx="1.5" cy="2" r="1.1" fill="#ccc"/><circle cx="6" cy="2" r="1.1" fill="#ccc"/><circle cx="10.5" cy="2" r="1.1" fill="#ccc"/></svg>
<svg style="position:absolute;left:1171px;top:45px;" width="16" height="16" viewBox="0 0 16 16"><path d="M8 1 V15 M1 8 H15" stroke="#cccccc" stroke-width="1.3"/></svg>
<svg style="position:absolute;left:1190px;top:50px;" width="10" height="7" viewBox="0 0 10 7"><path d="M1 1.5 L5 5.5 L9 1.5" fill="none" stroke="#cccccc" stroke-width="1.2"/></svg>
<svg style="position:absolute;left:1210px;top:45px;" width="16" height="16" viewBox="0 0 16 16"><path d="M13.11 5.96 L15.12 6.37 L15.12 9.63 L13.11 10.04 L13.05 10.17 L14.18 11.88 L11.88 14.18 L10.17 13.05 L10.04 13.11 L9.63 15.12 L6.37 15.12 L5.96 13.11 L5.83 13.05 L4.12 14.18 L1.82 11.88 L2.95 10.17 L2.89 10.04 L0.88 9.63 L0.88 6.37 L2.89 5.96 L2.95 5.83 L1.82 4.12 L4.12 1.82 L5.83 2.95 L5.96 2.89 L6.37 0.88 L9.63 0.88 L10.04 2.89 L10.17 2.95 L11.88 1.82 L14.18 4.12 L13.05 5.83 Z" fill="none" stroke="#cccccc" stroke-width="1.2" stroke-linejoin="round"/><circle cx="8" cy="8" r="2" fill="none" stroke="#cccccc" stroke-width="1.2"/></svg>
<svg style="position:absolute;left:1238px;top:51px;" width="12" height="4" viewBox="0 0 12 4"><circle cx="1.5" cy="2" r="1.1" fill="#ccc"/><circle cx="6" cy="2" r="1.1" fill="#ccc"/><circle cx="10.5" cy="2" r="1.1" fill="#ccc"/></svg>
<div style="position:absolute;left:1263px;top:45px;width:1px;height:16px;background:#4a4a4a;"></div>
<svg style="position:absolute;left:1276px;top:46px;" width="14" height="14" viewBox="0 0 14 14"><path d="M1 4.5 V1 H4.5 M9.5 1 H13 V4.5 M13 9.5 V13 H9.5 M4.5 13 H1 V9.5" fill="none" stroke="#cccccc" stroke-width="1.3"/></svg>
<svg style="position:absolute;left:1193px;top:207px;" width="43" height="40" viewBox="0 0 43 40"><path d="M21 8 H8 Q3 8 3 13 V27 Q3 32 8 32 H10 V38.5 L18 32 H27 Q32 32 32 27 V24" fill="none" stroke="#cccccc" stroke-width="2.6" stroke-linejoin="round" stroke-linecap="round"/><path d="M30 0.5 L32 6.5 L38 8.5 L32 10.5 L30 16.5 L28 10.5 L22 8.5 L28 6.5 Z" fill="#cccccc"/><path d="M37 11 L38.3 14.7 L42 16 L38.3 17.3 L37 21 L35.7 17.3 L32 16 L35.7 14.7 Z" fill="#cccccc"/></svg>
<div style="position:absolute;top:262px;line-height:34px;font-family:'Liberation Sans',sans-serif;font-size:24px;color:#cccccc;white-space:pre;left:914.5px;width:600px;text-align:center;">Build with</div>
<div style="position:absolute;top:294px;line-height:34px;font-family:'Liberation Sans',sans-serif;font-size:24px;color:#cccccc;white-space:pre;left:914.5px;width:600px;text-align:center;">Agent</div>
<div style="position:absolute;top:333px;line-height:20px;font-family:'Liberation Sans',sans-serif;font-size:12.5px;color:#9d9d9d;white-space:pre;left:914.5px;width:600px;text-align:center;">AI responses may</div>
<div style="position:absolute;top:351px;line-height:20px;font-family:'Liberation Sans',sans-serif;font-size:12.5px;color:#9d9d9d;white-space:pre;left:914.5px;width:600px;text-align:center;">be inaccurate.</div>
<div style="position:absolute;top:374px;line-height:20px;font-family:'Liberation Sans',sans-serif;font-size:12.8px;color:#4daafc;white-space:pre;left:914.5px;width:600px;text-align:center;">Generate Agent</div>
<div style="position:absolute;left:914.5px;width:600px;text-align:center;top:392px;line-height:20px;font-family:'Liberation Sans',sans-serif;font-size:12.8px;color:#9d9d9d;white-space:pre"><span style="color:#4daafc">Instructions</span> to</div>
<div style="position:absolute;top:410px;line-height:20px;font-family:'Liberation Sans',sans-serif;font-size:12.8px;color:#9d9d9d;white-space:pre;left:915px;width:600px;text-align:center;transform:scaleX(1.035);transform-origin:50% 0;">onboard AI onto your</div>
<div style="position:absolute;top:428px;line-height:20px;font-family:'Liberation Sans',sans-serif;font-size:12.8px;color:#9d9d9d;white-space:pre;left:914.5px;width:600px;text-align:center;">codebase.</div>
<div style="position:absolute;top:493px;line-height:20px;font-family:'Liberation Sans',sans-serif;font-size:10.5px;color:#9d9d9d;white-space:pre;left:1142px;transform:scaleX(0.995);transform-origin:0 0;">SUGGESTED ACTIONS</div>
<div style="position:absolute;left:1142px;top:518px;width:113px;height:24px;background:#202020;border:1px solid #3c3c3c;border-radius:4px;box-sizing:border-box;"></div>
<div style="position:absolute;top:521px;line-height:20px;font-family:'Liberation Sans',sans-serif;font-size:12.6px;color:#cccccc;white-space:pre;left:1151.5px;transform:scaleX(0.995);transform-origin:0 0;">Build Workspace</div>
<div style="position:absolute;left:1142px;top:550px;width:91px;height:24px;background:#202020;border:1px solid #3c3c3c;border-radius:4px;box-sizing:border-box;"></div>
<div style="position:absolute;top:553px;line-height:20px;font-family:'Liberation Sans',sans-serif;font-size:12.6px;color:#cccccc;white-space:pre;left:1151px;transform:scaleX(0.995);transform-origin:0 0;">Show Config</div>
<div style="position:absolute;left:1142px;top:590px;width:145px;height:92px;background:#313131;border:1px solid #3c3c3c;border-radius:5px;box-sizing:border-box;"></div>
<div style="position:absolute;left:1149px;top:597px;width:24px;height:20px;background:transparent;border:1px solid #454545;border-radius:4px;box-sizing:border-box;"></div>
<svg style="position:absolute;left:1154px;top:601px;" width="14" height="13" viewBox="0 0 14 13"><path d="M9.5 3 L4 8.5 Q2.8 9.8 4 11 Q5.2 12.2 6.5 11 L12 5.5 Q14 3.2 12 1.3 Q10 -0.5 7.8 1.6 L2.3 7.1 Q-0.2 9.8 2.3 12.3" fill="none" stroke="#cccccc" stroke-width="1.1" transform="translate(0.5 0) scale(0.95)"/></svg>
<div style="position:absolute;left:1177px;top:597px;width:96px;height:20px;background:transparent;border:1px dashed #4a4a4a;border-radius:4px;box-sizing:border-box;"></div>
<svg style="position:absolute;left:1182px;top:602px;" width="10" height="10" viewBox="0 0 10 10"><path d="M5 0.5 V9.5 M0.5 5 H9.5" stroke="#9d9d9d" stroke-width="1.1"/></svg>
<svg style="position:absolute;left:1198px;top:601px;" width="11" height="11" viewBox="0 0 16 16"><path d="M13.20 5.92 L15.41 6.31 L15.41 9.69 L13.20 10.08 L13.15 10.21 L14.44 12.04 L12.04 14.44 L10.21 13.15 L10.08 13.20 L9.69 15.41 L6.31 15.41 L5.92 13.20 L5.79 13.15 L3.96 14.44 L1.56 12.04 L2.85 10.21 L2.80 10.08 L0.59 9.69 L0.59 6.31 L2.80 5.92 L2.85 5.79 L1.56 3.96 L3.96 1.56 L5.79 2.85 L5.92 2.80 L6.31 0.59 L9.69 0.59 L10.08 2.80 L10.21 2.85 L12.04 1.56 L14.44 3.96 L13.15 5.79 Z" fill="#6d8086"/><circle cx="8" cy="8" r="2.3" fill="#313131"/></svg>
<div style="position:absolute;top:597px;line-height:20px;font-family:'Liberation Sans',sans-serif;font-size:12px;color:#cccccc;white-space:pre;font-style:italic;left:1215px;transform:scaleX(0.93);transform-origin:0 0;">Cargo.toml</div>
<div style="position:absolute;top:626px;line-height:20px;font-family:'Liberation Sans',sans-serif;font-size:12.8px;color:#9d9d9d;white-space:pre;left:1149.5px;transform:scaleX(0.997);transform-origin:0 0;">Describe what to build</div>
<div style="position:absolute;top:655px;line-height:20px;font-family:'Liberation Sans',sans-serif;font-size:11.5px;color:#cccccc;white-space:pre;left:1155px;transform:scaleX(0.85);transform-origin:0 0;">A...</div>
<svg style="position:absolute;left:1176px;top:660px;" width="10" height="7" viewBox="0 0 10 7"><path d="M1 1.5 L5 5.5 L9 1.5" fill="none" stroke="#cccccc" stroke-width="1.1"/></svg>
<div style="position:absolute;top:655px;line-height:20px;font-family:'Liberation Sans',sans-serif;font-size:11.5px;color:#cccccc;white-space:pre;left:1201px;transform:scaleX(0.85);transform-origin:0 0;">A..</div>
<svg style="position:absolute;left:1217px;top:660px;" width="10" height="7" viewBox="0 0 10 7"><path d="M1 1.5 L5 5.5 L9 1.5" fill="none" stroke="#cccccc" stroke-width="1.1"/></svg>
<svg style="position:absolute;left:1239px;top:656px;" width="15" height="16" viewBox="0 0 15 16"><g fill="none" stroke="#cccccc" stroke-width="1.3" stroke-linejoin="round"><path d="M1.5 1 V3.5 Q1.5 6.3 3.5 6.8 V13.5 Q3.5 14.8 4.5 14.8 Q5.5 14.8 5.5 13.5 V6.8 Q7.5 6.3 7.5 3.5 V1 M4.5 1 V4"/><path d="M10.5 1.5 Q10.5 0.8 11.5 0.8 Q12.5 0.8 12.5 1.5 V6.5 H13.2 V13.5 Q13.2 14.8 11.5 14.8 Q9.8 14.8 9.8 13.5 V6.5 H10.5 Z"/></g></svg>
<svg style="position:absolute;left:1261px;top:656px;" width="16" height="16" viewBox="0 0 16 16"><path d="M1 1.5 L15 8 L1 14.5 L3.5 8 Z M3.5 8 H9" fill="none" stroke="#6f6f6f" stroke-width="1.2" stroke-linejoin="round"/></svg>
<svg style="position:absolute;left:90px;top:700px;" width="16" height="18" viewBox="0 0 16 18"><path d="M3.5 5.5 L7.5 9.5 L3.5 13.5 M14 2.5 L10 6.5 L14 10.5" fill="none" stroke="#cccccc" stroke-width="1.3"/></svg>
<svg style="position:absolute;left:123px;top:701px;" width="16" height="16" viewBox="0 0 16 16"><circle cx="8" cy="8" r="6.8" fill="none" stroke="#cccccc" stroke-width="1.2"/><path d="M5.3 5.3 L10.7 10.7 M10.7 5.3 L5.3 10.7" stroke="#cccccc" stroke-width="1.2"/></svg>
<div style="position:absolute;top:700px;line-height:20px;font-family:'Liberation Sans',sans-serif;font-size:12px;color:#cccccc;white-space:pre;left:142.5px;">0</div>
<svg style="position:absolute;left:152px;top:701px;" width="16" height="15" viewBox="0 0 16 15"><path d="M8 1.5 L15 14 H1 Z" fill="none" stroke="#cccccc" stroke-width="1.2" stroke-linejoin="round"/><path d="M8 5.5 V10 M8 11.5 V12.8" stroke="#cccccc" stroke-width="1.3"/></svg>
<div style="position:absolute;top:700px;line-height:20px;font-family:'Liberation Sans',sans-serif;font-size:12px;color:#cccccc;white-space:pre;left:171px;">0</div>
<div style="position:absolute;top:700px;line-height:20px;font-family:'Liberation Sans',sans-serif;font-size:11.5px;color:#cccccc;white-space:pre;left:933.5px;transform:scaleX(0.95);transform-origin:0 0;">Ln 1, Col 1</div>
<div style="position:absolute;top:700px;line-height:20px;font-family:'Liberation Sans',sans-serif;font-size:11.5px;color:#cccccc;white-space:pre;left:1005px;transform:scaleX(0.955);transform-origin:0 0;">Spaces: 4</div>
<div style="position:absolute;top:700px;line-height:20px;font-family:'Liberation Sans',sans-serif;font-size:11.5px;color:#cccccc;white-space:pre;left:1070px;transform:scaleX(0.95);transform-origin:0 0;">UTF-8</div>
<div style="position:absolute;top:700px;line-height:20px;font-family:'Liberation Sans',sans-serif;font-size:11.5px;color:#cccccc;white-space:pre;left:1117px;transform:scaleX(0.87);transform-origin:0 0;">CRLF</div>
<div style="position:absolute;top:700px;line-height:20px;font-family:'Liberation Sans',sans-serif;font-size:11.5px;color:#cccccc;white-space:pre;left:1181.5px;transform:scaleX(0.965);transform-origin:0 0;">Plain Text</div>
<div style="position:absolute;top:700px;line-height:20px;font-family:'Liberation Sans',sans-serif;font-size:11.5px;color:#cccccc;white-space:pre;left:1161px;">{ }</div>
<svg style="position:absolute;left:1246px;top:701px;" width="18" height="16" viewBox="0 0 18 16"><g fill="none" stroke="#cccccc" stroke-width="1.3"><circle cx="6.2" cy="4.3" r="2.9"/><circle cx="11.8" cy="4.3" r="2.9"/><path d="M2.6 7 Q0.8 8.5 0.9 11 Q1.2 15 9 15 Q16.8 15 17.1 11 Q17.2 8.5 15.4 7"/><path d="M4.8 8.6 H13.2 V12.6 H4.8 Z"/></g><path d="M7.3 9.6 V11.8 M10.7 9.6 V11.8" stroke="#cccccc" stroke-width="1.3"/></svg>
<svg style="position:absolute;left:1280px;top:700px;" width="16" height="17" viewBox="0 0 16 17"><path d="M8 2 Q3.5 2 3.5 7 V11 L2 13 H14 L12.5 11 V7 Q12.5 2 8 2 Z M6.5 14.5 Q8 16.5 9.5 14.5" fill="none" stroke="#cccccc" stroke-width="1.2" stroke-linejoin="round"/><circle cx="12.5" cy="3.5" r="3" fill="#cccccc" stroke="#181818" stroke-width="1"/></svg>
<div style="position:absolute;left:0;top:720px;width:1366px;height:48px;background:linear-gradient(90deg,#1f2a33 0px,#1f2a34 205px,#1c2a3e 250px,#17284a 295px,#13264c 340px,#13254c 480px,#13254a 930px,#172640 1000px,#1c2838 1035px,#1f2934 1060px,#1f2934 1366px)"></div>
<div style="position:absolute;left:0px;top:719px;width:1366px;height:1px;background:#a9d6e0;"></div>
<svg style="position:absolute;left:487px;top:733px;" width="23" height="23" viewBox="0 0 23 23"><defs><linearGradient id="wg" x1="0" y1="0" x2="1" y2="1"><stop offset="0" stop-color="#6fd8ff"/><stop offset="1" stop-color="#1a9de0"/></linearGradient></defs><rect x="0" y="0" width="11" height="11" fill="url(#wg)"/><rect x="12" y="0" width="11" height="11" fill="url(#wg)"/><rect x="0" y="12" width="11" height="11" fill="url(#wg)"/><rect x="12" y="12" width="11" height="11" fill="url(#wg)"/></svg>
<div style="position:absolute;left:524px;top:728px;width:100px;height:32px;background:#243253;border-radius:16px;"></div>
<svg style="position:absolute;left:546px;top:736px;" width="16" height="17" viewBox="0 0 16 17"><circle cx="6.5" cy="6.5" r="5.2" fill="none" stroke="#ffffff" stroke-width="1.8"/><path d="M10.3 10.3 L15 15" stroke="#ffffff" stroke-width="2" stroke-linecap="round"/></svg>
<div style="position:absolute;top:736px;line-height:20px;font-family:'Liberation Sans',sans-serif;font-size:12.5px;color:#ffffff;white-space:pre;left:566px;transform:scaleX(0.95);transform-origin:0 0;">Search</div>
<svg style="position:absolute;left:637px;top:732px;" width="24" height="24" viewBox="0 0 24 24"><circle cx="12" cy="12" r="12" fill="#e21c38"/><circle cx="12.6" cy="13.2" r="4.6" fill="#b0102a" stroke="#fff" stroke-width="2.2"/><path d="M7.1 2.6 V13.2" stroke="#fff" stroke-width="2.2"/></svg>
<svg style="position:absolute;left:681px;top:732px;" width="24" height="24" viewBox="0 0 24 24"><defs><linearGradient id="cpta" x1="0" y1="0" x2="0" y2="1"><stop offset="0" stop-color="#12a2f0"/><stop offset="0.55" stop-color="#5cc85a"/><stop offset="1" stop-color="#ffd21a"/></linearGradient><linearGradient id="cptb" x1="0" y1="0" x2="0" y2="1"><stop offset="0" stop-color="#b860f0"/><stop offset="0.5" stop-color="#f8609a"/><stop offset="1" stop-color="#ffb040"/></linearGradient></defs><g transform="skewX(-14)"><rect x="5.5" y="1.6" width="12.5" height="15" rx="3.2" fill="url(#cpta)"/><rect x="3" y="9" width="6" height="7.6" fill="#f06030" opacity="0.0"/><rect x="11.5" y="7.2" width="12.5" height="15" rx="3.2" fill="url(#cptb)"/><path d="M12.2 8 L13.4 16.5" stroke="#13234c" stroke-width="1.6"/></g></svg>
<svg style="position:absolute;left:725px;top:732px;" width="24" height="24" viewBox="0 0 24 24"><defs><linearGradient id="og" x1="0" y1="0" x2="0" y2="1"><stop offset="0" stop-color="#ff1b2d"/><stop offset="1" stop-color="#a70014"/></linearGradient></defs><path fill-rule="evenodd" d="M12 0.5 A11.5 11.5 0 1 1 11.99 0.5 Z M12 2.8 A5.8 9.2 0 1 0 12.01 2.8 Z" fill="url(#og)"/></svg>
<div style="position:absolute;left:734px;top:760px;width:6px;height:3px;background:#9aa0a8;border-radius:2px;"></div>
<svg style="position:absolute;left:768px;top:731px;" width="26" height="25" viewBox="0 0 26 25"><defs><linearGradient id="fg" x1="0" y1="0" x2="0" y2="1"><stop offset="0" stop-color="#ffe27a"/><stop offset="1" stop-color="#f8b81c"/></linearGradient></defs><path d="M1 3.5 Q1 2 2.5 2 H8.5 L10.5 4.5 H23.5 Q25 4.5 25 6 V21 Q25 22.5 23.5 22.5 H2.5 Q1 22.5 1 21 Z" fill="#e9a80e"/><path d="M1 6.5 H25 V21 Q25 22.5 23.5 22.5 H2.5 Q1 22.5 1 21 Z" fill="url(#fg)"/><path d="M5.5 22.5 V16.5 Q5.5 14.5 7.5 14.5 H18.5 Q20.5 14.5 20.5 16.5 V22.5 Z" fill="#1a82d8"/><path d="M8 18 H18" stroke="#0f5fae" stroke-width="1.2"/></svg>
<div style="position:absolute;left:778px;top:760px;width:6px;height:3px;background:#9aa0a8;border-radius:2px;"></div>
<svg style="position:absolute;left:815px;top:731px;" width="20" height="26" viewBox="0 0 20 26"><rect x="1" y="3" width="18" height="19" rx="1.5" fill="#5fc4e8"/><rect x="1" y="20.5" width="18" height="2" fill="#f4f4f4"/><rect x="1" y="22.5" width="18" height="2.2" fill="#c8661a"/><path d="M4.5 1.5 V4.5 M8 1.5 V4.5 M11.5 1.5 V4.5 M15 1.5 V4.5" stroke="#157a9e" stroke-width="1.6" stroke-linecap="round"/><path d="M4 9 H16 M4 13 H16 M4 17 H16" stroke="#13708f" stroke-width="1.6"/></svg>
<div style="position:absolute;left:822px;top:760px;width:6px;height:3px;background:#9aa0a8;border-radius:2px;"></div>
<div style="position:absolute;left:849px;top:724px;width:40px;height:40px;background:#243252;border-radius:5px;border:1px solid #2c3a58;box-sizing:border-box;"></div>
<svg style="position:absolute;left:856px;top:731px;" width="25" height="25" viewBox="0 0 100 100"><defs><clipPath id="vsb"><rect x="0" y="0" width="71" height="100"/></clipPath></defs><path d="M96.46 10.8L75.86.87a6.23 6.23 0 0 0-7.1 1.2L29.4 38.04 12.26 25.02a4.16 4.16 0 0 0-5.32.24L1.43 30.26a4.17 4.17 0 0 0 0 6.16L16.3 50 1.43 63.58a4.17 4.17 0 0 0 0 6.16l5.51 5a4.16 4.16 0 0 0 5.32.24l17.14-13.02 39.36 35.96a6.23 6.23 0 0 0 7.1 1.2l20.6-9.92a6.25 6.25 0 0 0 3.54-5.63V16.43a6.25 6.25 0 0 0-3.54-5.63zM75.02 72.7 45.1 50l29.92-22.7v45.4z" fill="#24a8f4"/><path d="M96.46 10.8L75.86.87a6.23 6.23 0 0 0-7.1 1.2L29.4 38.04 12.26 25.02a4.16 4.16 0 0 0-5.32.24L1.43 30.26a4.17 4.17 0 0 0 0 6.16L16.3 50 1.43 63.58a4.17 4.17 0 0 0 0 6.16l5.51 5a4.16 4.16 0 0 0 5.32.24l17.14-13.02 39.36 35.96a6.23 6.23 0 0 0 7.1 1.2l20.6-9.92a6.25 6.25 0 0 0 3.54-5.63V16.43a6.25 6.25 0 0 0-3.54-5.63zM75.02 72.7 45.1 50l29.92-22.7v45.4z" fill="#0a78cf" clip-path="url(#vsb)"/></svg>
<div style="position:absolute;left:861px;top:760px;width:17px;height:3px;background:#5fbaf5;border-radius:2px;"></div>
<svg style="position:absolute;left:1130px;top:740px;" width="12" height="8" viewBox="0 0 12 8"><path d="M1 7 L6 2 L11 7" fill="none" stroke="#ffffff" stroke-width="1.4"/></svg>
<div style="position:absolute;top:727px;line-height:20px;font-family:'Liberation Sans',sans-serif;font-size:11.2px;color:#ffffff;white-space:pre;left:874px;width:600px;text-align:center;">ENG</div>
<div style="position:absolute;top:743px;line-height:20px;font-family:'Liberation Sans',sans-serif;font-size:11.2px;color:#ffffff;white-space:pre;left:874px;width:600px;text-align:center;">US</div>
<svg style="position:absolute;left:1203px;top:737px;" width="18" height="13" viewBox="0 0 18 13"><path d="M1 5 Q9 -2 17 5 M3.8 7.8 Q9 3 14.2 7.8 M6.5 10.3 Q9 8 11.5 10.3" fill="none" stroke="#fff" stroke-width="1.5" stroke-linecap="round"/><circle cx="9" cy="12" r="1.2" fill="#fff"/></svg>
<svg style="position:absolute;left:1227px;top:736px;" width="18" height="14" viewBox="0 0 18 14"><path d="M1 4.5 H4 L8 1 V13 L4 9.5 H1 Z" fill="none" stroke="#fff" stroke-width="1.2" stroke-linejoin="round"/><path d="M10.5 4.5 Q12 7 10.5 9.5" fill="none" stroke="#fff" stroke-width="1.2"/><path d="M13 3 Q15.5 7 13 11" fill="none" stroke="#9aa" stroke-width="1.1"/><path d="M15.5 1.5 Q18.8 7 15.5 12.5" fill="none" stroke="#777" stroke-width="1.1"/></svg>
<svg style="position:absolute;left:1251px;top:735px;" width="18" height="15" viewBox="0 0 18 15"><rect x="1" y="4" width="14" height="9.5" rx="1.5" fill="none" stroke="#fff" stroke-width="1.3"/><rect x="15.3" y="6.8" width="1.8" height="4" fill="#fff"/><rect x="3" y="6" width="10" height="5.5" fill="#fff"/><path d="M6 0.5 L3.5 5 H6 L4.5 8.5" fill="none" stroke="#fff" stroke-width="1.1"/></svg>
<div style="position:absolute;top:727px;line-height:20px;font-family:'Liberation Sans',sans-serif;font-size:11.5px;color:#ffffff;white-space:pre;right:19.5px;">22:01</div>
<div style="position:absolute;top:743px;line-height:20px;font-family:'Liberation Sans',sans-serif;font-size:11.5px;color:#ffffff;white-space:pre;right:19px;transform:scaleX(1.085);transform-origin:100% 0;">2026/02/24</div>
</body></html>
